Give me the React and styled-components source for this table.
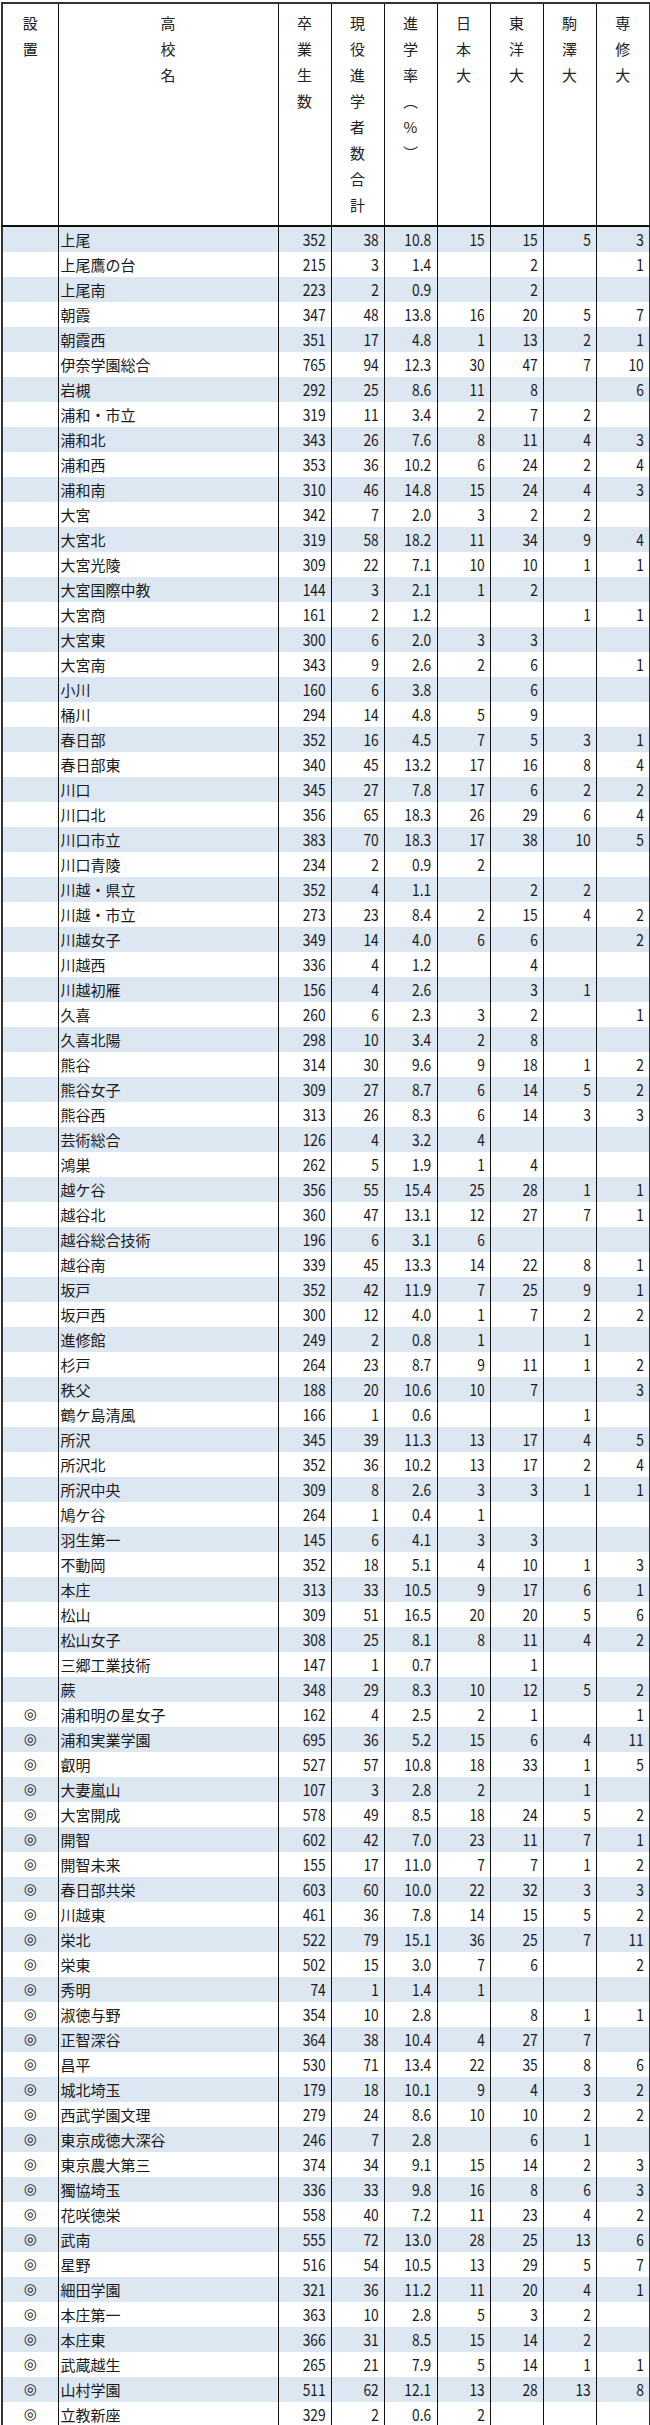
import React from "react";
import styled, { createGlobalStyle } from "styled-components";

const GlobalStyle = createGlobalStyle`
  html, body {
    margin: 0;
    padding: 0;
    background: #ffffff;
  }
  body {
    font-family: "Noto Sans CJK JP", "Noto Sans", sans-serif;
    color: #1a1a1a;
  }
`;

const COLS = [56, 220, 53, 53, 53, 53, 53, 53, 54];

const HEADS = [
  ["設", "置"],
  ["高", "校", "名"],
  ["卒", "業", "生", "数"],
  ["現", "役", "進", "学", "者", "数", "合", "計"],
  ["進", "学", "率", "︵", "%", "︶"],
  ["日", "本", "大"],
  ["東", "洋", "大"],
  ["駒", "澤", "大"],
  ["専", "修", "大"],
];

// 県立
const PUBLIC = [
  "上尾|352|38|10.8|15|15|5|3",
  "上尾鷹の台|215|3|1.4||2||1",
  "上尾南|223|2|0.9||2||",
  "朝霞|347|48|13.8|16|20|5|7",
  "朝霞西|351|17|4.8|1|13|2|1",
  "伊奈学園総合|765|94|12.3|30|47|7|10",
  "岩槻|292|25|8.6|11|8||6",
  "浦和・市立|319|11|3.4|2|7|2|",
  "浦和北|343|26|7.6|8|11|4|3",
  "浦和西|353|36|10.2|6|24|2|4",
  "浦和南|310|46|14.8|15|24|4|3",
  "大宮|342|7|2.0|3|2|2|",
  "大宮北|319|58|18.2|11|34|9|4",
  "大宮光陵|309|22|7.1|10|10|1|1",
  "大宮国際中教|144|3|2.1|1|2||",
  "大宮商|161|2|1.2|||1|1",
  "大宮東|300|6|2.0|3|3||",
  "大宮南|343|9|2.6|2|6||1",
  "小川|160|6|3.8||6||",
  "桶川|294|14|4.8|5|9||",
  "春日部|352|16|4.5|7|5|3|1",
  "春日部東|340|45|13.2|17|16|8|4",
  "川口|345|27|7.8|17|6|2|2",
  "川口北|356|65|18.3|26|29|6|4",
  "川口市立|383|70|18.3|17|38|10|5",
  "川口青陵|234|2|0.9|2|||",
  "川越・県立|352|4|1.1||2|2|",
  "川越・市立|273|23|8.4|2|15|4|2",
  "川越女子|349|14|4.0|6|6||2",
  "川越西|336|4|1.2||4||",
  "川越初雁|156|4|2.6||3|1|",
  "久喜|260|6|2.3|3|2||1",
  "久喜北陽|298|10|3.4|2|8||",
  "熊谷|314|30|9.6|9|18|1|2",
  "熊谷女子|309|27|8.7|6|14|5|2",
  "熊谷西|313|26|8.3|6|14|3|3",
  "芸術総合|126|4|3.2|4|||",
  "鴻巣|262|5|1.9|1|4||",
  "越ケ谷|356|55|15.4|25|28|1|1",
  "越谷北|360|47|13.1|12|27|7|1",
  "越谷総合技術|196|6|3.1|6|||",
  "越谷南|339|45|13.3|14|22|8|1",
  "坂戸|352|42|11.9|7|25|9|1",
  "坂戸西|300|12|4.0|1|7|2|2",
  "進修館|249|2|0.8|1||1|",
  "杉戸|264|23|8.7|9|11|1|2",
  "秩父|188|20|10.6|10|7||3",
  "鶴ケ島清風|166|1|0.6|||1|",
  "所沢|345|39|11.3|13|17|4|5",
  "所沢北|352|36|10.2|13|17|2|4",
  "所沢中央|309|8|2.6|3|3|1|1",
  "鳩ケ谷|264|1|0.4|1|||",
  "羽生第一|145|6|4.1|3|3||",
  "不動岡|352|18|5.1|4|10|1|3",
  "本庄|313|33|10.5|9|17|6|1",
  "松山|309|51|16.5|20|20|5|6",
  "松山女子|308|25|8.1|8|11|4|2",
  "三郷工業技術|147|1|0.7||1||",
  "蕨|348|29|8.3|10|12|5|2",
];

// 私立
const PRIVATE = [
  "浦和明の星女子|162|4|2.5|2|1||1",
  "浦和実業学園|695|36|5.2|15|6|4|11",
  "叡明|527|57|10.8|18|33|1|5",
  "大妻嵐山|107|3|2.8|2||1|",
  "大宮開成|578|49|8.5|18|24|5|2",
  "開智|602|42|7.0|23|11|7|1",
  "開智未来|155|17|11.0|7|7|1|2",
  "春日部共栄|603|60|10.0|22|32|3|3",
  "川越東|461|36|7.8|14|15|5|2",
  "栄北|522|79|15.1|36|25|7|11",
  "栄東|502|15|3.0|7|6||2",
  "秀明|74|1|1.4|1|||",
  "淑徳与野|354|10|2.8||8|1|1",
  "正智深谷|364|38|10.4|4|27|7|",
  "昌平|530|71|13.4|22|35|8|6",
  "城北埼玉|179|18|10.1|9|4|3|2",
  "西武学園文理|279|24|8.6|10|10|2|2",
  "東京成徳大深谷|246|7|2.8||6|1|",
  "東京農大第三|374|34|9.1|15|14|2|3",
  "獨協埼玉|336|33|9.8|16|8|6|3",
  "花咲徳栄|558|40|7.2|11|23|4|2",
  "武南|555|72|13.0|28|25|13|6",
  "星野|516|54|10.5|13|29|5|7",
  "細田学園|321|36|11.2|11|20|4|1",
  "本庄第一|363|10|2.8|5|3|2|",
  "本庄東|366|31|8.5|15|14|2|",
  "武蔵越生|265|21|7.9|5|14|1|1",
  "山村学園|511|62|12.1|13|28|13|8",
  "立教新座|329|2|0.6|2|||",
];

const ROWS = [
  ...PUBLIC.map((r) => ({ mark: "", cells: r.split("|") })),
  ...PRIVATE.map((r) => ({ mark: "◎", cells: r.split("|") })),
];

const Page = styled.div`
  padding: 2px 1px 2px 1px;
`;

const Table = styled.table`
  width: 648px;
  table-layout: fixed;
  border-collapse: collapse;
  border: 2px solid #333;
`;

const HeadCell = styled.th`
  height: 215px;
  padding: 6px 0 0;
  vertical-align: top;
  font-weight: 400;
  border-left: 1px solid #111;
  border-right: 1px solid #111;
  border-bottom: 2px solid #111;
  background: #ffffff;
`;

const Stack = styled.div`
  display: flex;
  flex-direction: column;
  align-items: center;
  font-size: 15px;
  line-height: 26px;
  color: #222;
`;

const Row = styled.tr`
  background: ${(p) => (p.$shade ? "#dde7f2" : "#ffffff")};
`;

const Cell = styled.td`
  height: 25px;
  padding: 0;
  border-left: 1px solid #111;
  border-right: 1px solid #111;
  font-size: 15px;
  line-height: 25px;
  white-space: nowrap;
  overflow: hidden;
`;

const MarkCell = styled(Cell)`
  text-align: center;
  font-family: "DejaVu Sans", "Noto Sans CJK JP", sans-serif;
  font-size: 15px;
  color: #222;
`;

const NameCell = styled(Cell)`
  padding-left: 2px;
  text-align: left;
`;

const NumCell = styled(Cell)`
  padding-right: 5px;
  text-align: right;
`;

const Num = styled.span`
  display: inline-block;
  font-size: 16px;
  transform: scaleX(0.86);
  transform-origin: right center;
`;

export default function App() {
  return (
    <Page>
      <GlobalStyle />
      <Table>
        <colgroup>
          {COLS.map((w, i) => (
            <col key={i} style={{ width: w }} />
          ))}
        </colgroup>
        <thead>
          <tr>
            {HEADS.map((chars, i) => (
              <HeadCell key={i}>
                <Stack>
                  {chars.map((c, j) => (
                    <span key={j}>{c}</span>
                  ))}
                </Stack>
              </HeadCell>
            ))}
          </tr>
        </thead>
        <tbody>
          {ROWS.map((row, i) => {
            const [name, ...nums] = row.cells;
            return (
              <Row key={name} $shade={i % 2 === 0}>
                <MarkCell>{row.mark}</MarkCell>
                <NameCell>{name}</NameCell>
                {nums.map((n, j) => (
                  <NumCell key={j}>{n && <Num>{n}</Num>}</NumCell>
                ))}
              </Row>
            );
          })}
        </tbody>
      </Table>
    </Page>
  );
}
